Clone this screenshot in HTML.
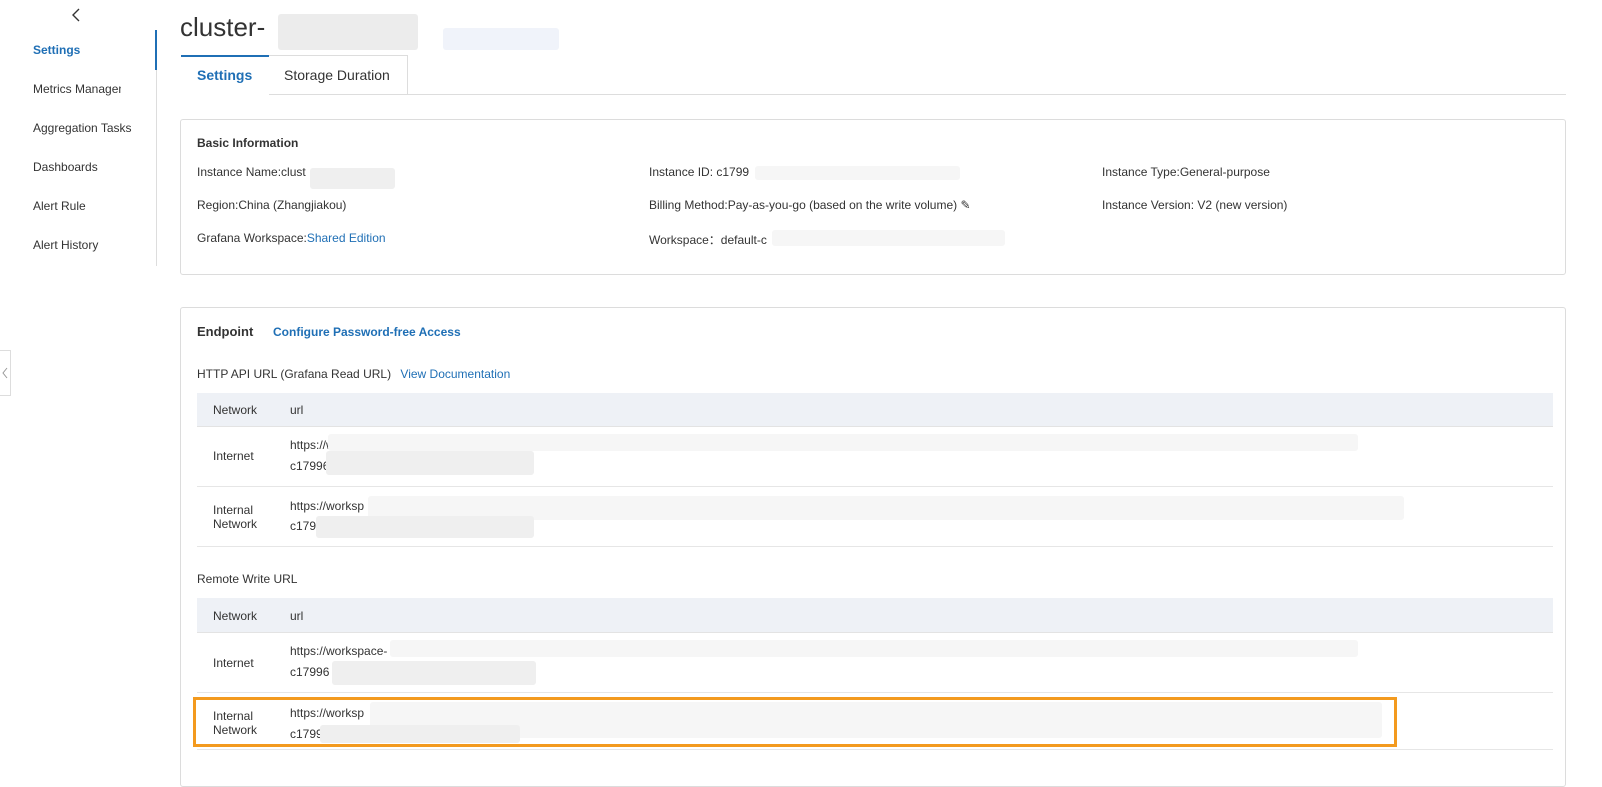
<!DOCTYPE html>
<html><head><meta charset="utf-8"><style>
*{margin:0;padding:0;box-sizing:border-box}
body{width:1602px;height:770px;overflow:hidden;background:#fff;font-family:"Liberation Sans",Arial,sans-serif;color:#333;position:relative;font-size:12px}
.a{position:absolute}
.nav{left:33px;font-size:12px;color:#333}
.blur{position:absolute;background:#efefef;border-radius:3px}
.lt{background:#f6f6f6}
.card{position:absolute;left:180px;right:36px;border:1px solid #dcdcdc;border-radius:3px;background:#fff}
.th{position:absolute;left:197px;width:1356px;background:#eef1f6;border-bottom:1px solid #e3e3e3}
.row{position:absolute;left:197px;width:1356px;border-bottom:1px solid #e6e6e6}
.blue{color:#1f6fb5}
</style></head><body>
<svg class="a" style="left:70px;top:8px" width="12" height="14"><path d="M9 1L3 7l6 6" stroke="#333" stroke-width="1.4" fill="none"/></svg>
<div class="a nav blue" style="top:43px;font-weight:bold">Settings</div>
<div class="a nav" style="top:82px;width:88px;overflow:hidden;white-space:nowrap">Metrics Management</div>
<div class="a nav" style="top:121px">Aggregation Tasks</div>
<div class="a nav" style="top:160px">Dashboards</div>
<div class="a nav" style="top:199px">Alert Rule</div>
<div class="a nav" style="top:238px">Alert History</div>
<div class="a" style="left:156px;top:30px;width:1px;height:236px;background:#ddd"></div>
<div class="a" style="left:155px;top:30px;width:2px;height:40px;background:#1f6fb5"></div>
<div class="a" style="left:0;top:350px;width:11px;height:46px;border:1px solid #ddd;border-left:none;background:#fff"></div>
<svg class="a" style="left:1px;top:367px" width="8" height="12"><path d="M6 1L2 6l4 5" stroke="#999" fill="none"/></svg>

<div class="a" style="left:180px;top:12px;font-size:26px;color:#333">cluster-</div>
<div class="blur" style="left:278px;top:14px;width:140px;height:36px;background:#ececec"></div>
<div class="blur" style="left:443px;top:28px;width:116px;height:22px;background:#f0f3fa"></div>

<div class="a" style="left:181px;top:55px;width:88px;height:40px;border-top:2px solid #1f6fb5;background:#fff;z-index:2"></div>
<div class="a blue" style="left:197px;top:67px;font-size:14px;font-weight:bold;z-index:3">Settings</div>
<div class="a" style="left:268px;top:55px;width:140px;height:40px;border:1px solid #ddd;border-bottom:none"></div>
<div class="a" style="left:284px;top:67px;font-size:14px;color:#333">Storage Duration</div>
<div class="a" style="left:268px;top:94px;width:1298px;height:1px;background:#ddd"></div>

<div class="card" style="top:119px;height:156px"></div>
<div class="a" style="left:197px;top:136px;font-weight:bold">Basic Information</div>
<div class="a" style="left:197px;top:165px">Instance Name:clust</div>
<div class="blur" style="left:310px;top:168px;width:85px;height:21px"></div>
<div class="a" style="left:197px;top:198px">Region:China (Zhangjiakou)</div>
<div class="a" style="left:197px;top:231px">Grafana Workspace:<span class="blue">Shared Edition</span></div>
<div class="a" style="left:649px;top:165px">Instance ID: c1799</div>
<div class="blur lt" style="left:755px;top:166px;width:205px;height:14px"></div>
<div class="a" style="left:649px;top:198px">Billing Method:Pay-as-you-go (based on the write volume) ✎</div>
<div class="a" style="left:649px;top:231px">Workspace：default-c</div>
<div class="blur lt" style="left:772px;top:230px;width:233px;height:16px"></div>
<div class="a" style="left:1102px;top:165px">Instance Type:General-purpose</div>
<div class="a" style="left:1102px;top:198px">Instance Version: V2 (new version)</div>

<div class="card" style="top:307px;height:480px"></div>
<div class="a" style="left:197px;top:324px;font-size:13px;font-weight:bold">Endpoint</div>
<div class="a blue" style="left:273px;top:325px;font-weight:bold">Configure Password-free Access</div>
<div class="a" style="left:197px;top:367px">HTTP API URL (Grafana Read URL) <span class="blue" style="margin-left:6px">View Documentation</span></div>

<div class="th" style="top:393px;height:34px"></div>
<div class="a" style="left:213px;top:403px">Network</div><div class="a" style="left:290px;top:403px">url</div>
<div class="row" style="top:427px;height:60px"></div>
<div class="a" style="left:213px;top:449px">Internet</div>
<div class="a" style="left:290px;top:438px">https://wo</div><div class="a" style="left:290px;top:459px">c17996eb</div>
<div class="blur lt" style="left:328px;top:434px;width:1030px;height:17px"></div>
<div class="blur" style="left:326px;top:451px;width:208px;height:24px"></div>
<div class="row" style="top:487px;height:60px"></div>
<div class="a" style="left:213px;top:503px;line-height:14px">Internal<br>Network</div>
<div class="a" style="left:290px;top:499px">https://worksp</div><div class="a" style="left:290px;top:519px">c17996</div>
<div class="blur lt" style="left:368px;top:496px;width:1036px;height:24px"></div>
<div class="blur" style="left:316px;top:516px;width:218px;height:22px"></div>

<div class="a" style="left:197px;top:572px">Remote Write URL</div>
<div class="th" style="top:598px;height:35px"></div>
<div class="a" style="left:213px;top:609px">Network</div><div class="a" style="left:290px;top:609px">url</div>
<div class="row" style="top:633px;height:60px"></div>
<div class="a" style="left:213px;top:656px">Internet</div>
<div class="a" style="left:290px;top:644px">https://workspace-</div><div class="a" style="left:290px;top:665px">c17996</div>
<div class="blur lt" style="left:390px;top:640px;width:968px;height:17px"></div>
<div class="blur" style="left:332px;top:661px;width:204px;height:24px"></div>
<div class="row" style="top:693px;height:57px"></div>
<div class="a" style="left:213px;top:709px;line-height:14px">Internal<br>Network</div>
<div class="a" style="left:290px;top:706px">https://worksp</div><div class="a" style="left:290px;top:727px">c1799</div>
<div class="blur lt" style="left:370px;top:702px;width:1012px;height:36px"></div>
<div class="blur" style="left:320px;top:725px;width:200px;height:18px"></div>
<div class="a" style="left:193px;top:697px;width:1204px;height:50px;border:3px solid #f39a1e"></div>
</body></html>
